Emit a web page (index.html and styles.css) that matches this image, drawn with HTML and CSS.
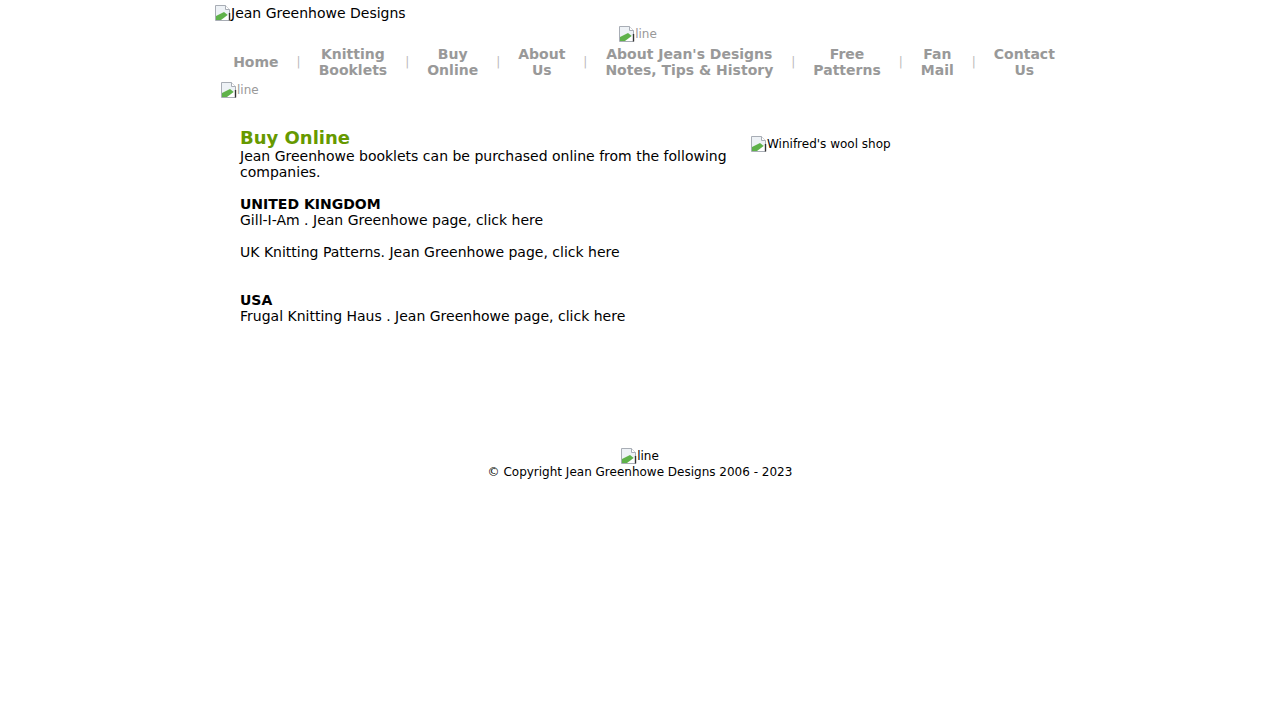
FILE: index.html
```html
<!DOCTYPE html>
<html lang="en">
<head>
    <meta charset="UTF-8">
    <title>Jean Greenhowe Designs - Buy Online</title>
    <link rel="stylesheet" href="styles.css">
</head>
<body>

<div class="page">

    <header class="masthead">
        <span class="broken">
            <svg class="broken-icon" viewBox="0 0 16 16"><path d="M0.5 0.5h10l4 4v11h-14z" fill="#eef2f6" stroke="#a8adb5"/><path d="M10.5 0.5v4h4" fill="#fff" stroke="#a8adb5"/><path d="M1 15V11l8-4 5 4v4z" fill="#5fb24a"/><path d="M6 15l8-6v6z" fill="#fff"/><path d="M14.5 8v7.5" stroke="#333" stroke-width="1.4"/></svg>Jean Greenhowe Designs
        </span>
    </header>

    <nav class="menu">
        <div class="rule rule-top">
            <span class="broken grey">
                <svg class="broken-icon" viewBox="0 0 16 16"><path d="M0.5 0.5h10l4 4v11h-14z" fill="#eef2f6" stroke="#a8adb5"/><path d="M10.5 0.5v4h4" fill="#fff" stroke="#a8adb5"/><path d="M1 15V11l8-4 5 4v4z" fill="#5fb24a"/><path d="M6 15l8-6v6z" fill="#fff"/><path d="M14.5 8v7.5" stroke="#333" stroke-width="1.4"/></svg>line
            </span>
        </div>

        <ul class="menu-items">
            <li><a href="#">Home</a></li>
            <li class="sep">|</li>
            <li><a href="#">Knitting<br>Booklets</a></li>
            <li class="sep">|</li>
            <li><a href="#">Buy<br>Online</a></li>
            <li class="sep">|</li>
            <li><a href="#">About<br>Us</a></li>
            <li class="sep">|</li>
            <li><a href="#">About Jean's Designs<br>Notes, Tips &amp; History</a></li>
            <li class="sep">|</li>
            <li><a href="#">Free<br>Patterns</a></li>
            <li class="sep">|</li>
            <li><a href="#">Fan<br>Mail</a></li>
            <li class="sep">|</li>
            <li><a href="#">Contact<br>Us</a></li>
        </ul>

        <div class="rule rule-left">
            <span class="broken grey">
                <svg class="broken-icon" viewBox="0 0 16 16"><path d="M0.5 0.5h10l4 4v11h-14z" fill="#eef2f6" stroke="#a8adb5"/><path d="M10.5 0.5v4h4" fill="#fff" stroke="#a8adb5"/><path d="M1 15V11l8-4 5 4v4z" fill="#5fb24a"/><path d="M6 15l8-6v6z" fill="#fff"/><path d="M14.5 8v7.5" stroke="#333" stroke-width="1.4"/></svg>line
            </span>
        </div>
    </nav>

    <main class="content">
        <div class="text-col">
            <h1>Buy Online</h1>
            Jean Greenhowe booklets can be purchased online from the following companies.<br>
            <br>
            <b>UNITED KINGDOM</b><br>
            Gill-I-Am . Jean Greenhowe page, <a href="#">click here</a><br>
            <br>
            UK Knitting Patterns. Jean Greenhowe page, <a href="#">click here</a><br>
            <br>
            <br>
            <b>USA</b><br>
            Frugal Knitting Haus . Jean Greenhowe page, <a href="#">click here</a>
        </div>

        <div class="side-col">
            <span class="broken small">
                <svg class="broken-icon" viewBox="0 0 16 16"><path d="M0.5 0.5h10l4 4v11h-14z" fill="#eef2f6" stroke="#a8adb5"/><path d="M10.5 0.5v4h4" fill="#fff" stroke="#a8adb5"/><path d="M1 15V11l8-4 5 4v4z" fill="#5fb24a"/><path d="M6 15l8-6v6z" fill="#fff"/><path d="M14.5 8v7.5" stroke="#333" stroke-width="1.4"/></svg>Winifred's wool shop
            </span>
        </div>
    </main>

    <footer class="footer">
        <div class="rule">
            <span class="broken small">
                <svg class="broken-icon" viewBox="0 0 16 16"><path d="M0.5 0.5h10l4 4v11h-14z" fill="#eef2f6" stroke="#a8adb5"/><path d="M10.5 0.5v4h4" fill="#fff" stroke="#a8adb5"/><path d="M1 15V11l8-4 5 4v4z" fill="#5fb24a"/><path d="M6 15l8-6v6z" fill="#fff"/><path d="M14.5 8v7.5" stroke="#333" stroke-width="1.4"/></svg>line
            </span>
        </div>
        <div class="copyright">&copy; Copyright Jean Greenhowe Designs 2006 - 2023</div>
    </footer>

</div>

</body>
</html>
```

FILE: styles.css
```css
body {
    margin: 0;
    padding: 0;
    background-color: #fff;
    color: #000;
    font-family: "DejaVu Sans", Verdana, sans-serif;
    font-size: 14px;
    line-height: 16px;
}

.page {
    width: 850px;
    margin: 0 auto;
    padding-top: 5px;
}

/* broken image placeholders */
.broken {
    display: inline-flex;
    align-items: center;
    height: 16px;
    line-height: 16px;
    white-space: nowrap;
}

.broken-icon {
    width: 16px;
    height: 16px;
    flex: none;
}

.grey {
    color: #999;
    font-size: 12px;
}

.small {
    font-size: 12px;
}

/* header */
.masthead {
    height: 16px;
}

/* menu */
.menu {
    margin-top: 5px;
}

.rule-top {
    text-align: center;
    height: 16px;
    padding-right: 4px;
}

.rule-left {
    height: 16px;
    margin-top: 4px;
    padding-left: 6px;
}

.menu-items {
    list-style: none;
    margin: 4px 0 0;
    padding: 0 0 0 8px;
    display: flex;
    justify-content: center;
    align-items: center;
    height: 32px;
}

.menu-items li {
    padding: 0 18px;
    text-align: center;
    white-space: nowrap;
    flex: none;
}

.menu-items a {
    color: #999;
    font-weight: bold;
    text-decoration: none;
    display: block;
}

.menu-items a:hover {
    color: #669900;
}

.menu-items .sep {
    padding: 0;
    color: #bbb;
    font-size: 12px;
}

/* content */
.content {
    display: flex;
    margin-top: 30px;
    padding-left: 25px;
}

.text-col {
    width: 505px;
}

.text-col h1 {
    margin: 0;
    color: #669900;
    font-size: 18px;
    line-height: 20px;
}

.text-col a {
    color: #000;
    text-decoration: none;
}

.side-col {
    padding-left: 6px;
    padding-top: 8px;
}

/* footer */
.footer {
    margin-top: 124px;
    text-align: center;
    font-size: 12px;
}

.footer .rule {
    height: 16px;
}

.copyright {
    line-height: 16px;
}
```
